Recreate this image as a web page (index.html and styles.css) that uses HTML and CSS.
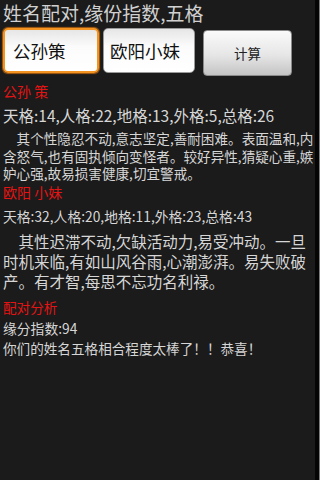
FILE: index.html
```html
<!DOCTYPE html>
<html lang="zh-CN">
<head>
<meta charset="utf-8">
<title>姓名配对</title>
<link rel="stylesheet" href="styles.css">
</head>
<body>
<div class="frame">
  <div class="screen">
    <div class="title">姓名配对,缘份指数,五格</div>
    <div class="form">
      <div class="field focused">公孙策</div>
      <div class="field">欧阳小妹</div>
      <div class="btn">计算</div>
    </div>
    <div class="name name1">公孙 策</div>
    <div class="stats stats1">天格:14,人格:22,地格:13,外格:5,总格:26</div>
    <div class="para para1">
      <div class="line">　其个性隐忍不动,意志坚定,善耐困难。表面温和,内</div>
      <div class="line">含怒气,也有固执倾向变怪者。较好异性,猜疑心重,嫉</div>
      <div class="line">妒心强,故易损害健康,切宜警戒。</div>
    </div>
    <div class="name name2">欧阳 小妹</div>
    <div class="stats stats2">天格:32,人格:20,地格:11,外格:23,总格:43</div>
    <div class="para para2">
      <div class="line">　其性迟滞不动,欠缺活动力,易受冲动。一旦</div>
      <div class="line">时机来临,有如山风谷雨,心潮澎湃。易失败破</div>
      <div class="line">产。有才智,每思不忘功名利禄。</div>
    </div>
    <div class="name name3">配对分析</div>
    <div class="score">缘分指数:94</div>
    <div class="result">你们的姓名五格相合程度太棒了！！恭喜！</div>
  </div>
</div>
</body>
</html>
```
FILE: styles.css
```css
html, body {
  margin: 0;
  padding: 0;
  background: #1b1b1b;
}
body {
  width: 320px;
  height: 480px;
  font-family: "Noto Sans CJK SC", "Noto Sans", sans-serif;
  color: #d6d6d6;
}
.frame {
  width: 319px;
  height: 480px;
  border-right: 1px solid #7c7c7c;
  background: #050505;
}
.screen {
  width: 312px;
  height: 480px;
  padding-left: 3px;
  margin-right: 4px;
  background: #1b1b1b;
}
.title {
  font-size: 19px;
  line-height: 24px;
  padding-top: 1px;
  color: #d0d0d0;
  white-space: nowrap;
}
.form {
  display: flex;
  align-items: flex-start;
  margin-top: 3px;
  height: 48px;
}
.field {
  box-sizing: border-box;
  height: 45px;
  border-radius: 5px;
  background: linear-gradient(#e6e6e6, #fbfbfb 40%, #ffffff);
  color: #111;
  font-size: 17.5px;
  line-height: 41px;
  white-space: nowrap;
}
.field.focused {
  width: 96px;
  border: 2px solid #f39422;
  padding-left: 8px;
  box-shadow: 0 0 1px 1px #a85c10;
}
.field:not(.focused) {
  width: 92px;
  margin-left: 4px;
  border: 1px solid #9a9a9a;
  padding-left: 6px;
  line-height: 43px;
}
.btn {
  box-sizing: border-box;
  width: 89px;
  height: 46px;
  margin-left: 8px;
  margin-top: 2px;
  border: 1px solid #8a8a8a;
  border-radius: 4px;
  background: linear-gradient(#fafafa, #e6e6e6 55%, #c4c4c4);
  color: #222;
  font-size: 13.5px;
  line-height: 44px;
  text-align: center;
}
.name {
  color: #e51414;
  font-size: 14px;
  white-space: nowrap;
}
.name1 {
  line-height: 22px;
  margin-top: 4px;
}
.stats {
  white-space: nowrap;
}
.stats1 {
  font-size: 15.5px;
  line-height: 26px;
}
.para1 {
  padding-top: 2px;
  font-size: 13.6px;
  line-height: 17.5px;
}
.line {
  white-space: nowrap;
}
.name2 {
  line-height: 19px;
}
.stats2 {
  font-size: 13.8px;
  line-height: 29px;
}
.para2 {
  font-size: 15.5px;
  line-height: 20px;
}
.name3 {
  font-size: 13.6px;
  line-height: 24px;
  margin-top: 4px;
}
.score {
  font-size: 13.8px;
  line-height: 18px;
}
.result {
  font-size: 13.6px;
  line-height: 22px;
  white-space: nowrap;
}
```
